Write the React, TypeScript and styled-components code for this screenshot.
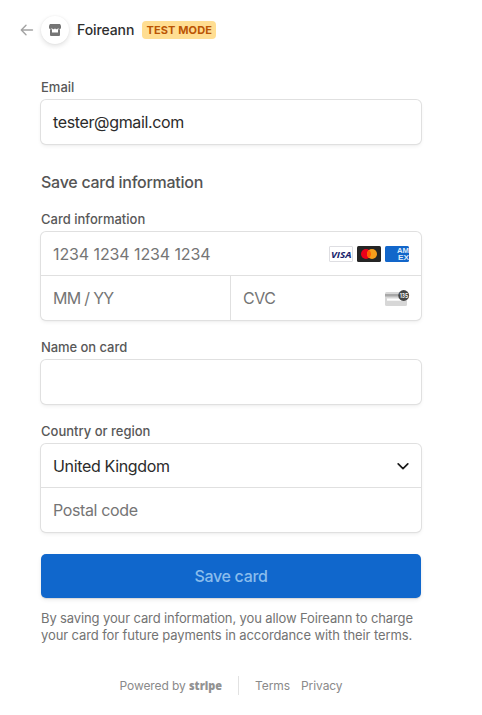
import React from "react";
import styled, { createGlobalStyle } from "styled-components";

const GlobalStyle = createGlobalStyle`
  *, *::before, *::after { box-sizing: border-box; }
  body {
    margin: 0;
    background: #fff;
    font-family: Inter, "Liberation Sans", sans-serif;
    -webkit-font-smoothing: antialiased;
  }
`;

const Page = styled.main`
  display: flex;
  flex-direction: column;
  width: 482px;
  height: 715px;
  overflow: hidden;
`;

const Header = styled.header`
  display: flex;
  align-items: center;
  height: 28px;
  margin: 16px 0 0 20px;
`;

const BackIcon = styled.svg`
  width: 14px;
  height: 12px;
  margin-right: 7px;
`;

const Avatar = styled.span`
  display: flex;
  align-items: center;
  justify-content: center;
  width: 28px;
  height: 28px;
  border-radius: 50%;
  box-shadow: 0 2px 5px rgba(0, 0, 0, 0.12), 0 0 2px rgba(0, 0, 0, 0.06);
`;

const Merchant = styled.h1`
  margin: 0 8px;
  width: 57px;
  white-space: nowrap;
  font-size: 14px;
  line-height: 18px;
  font-weight: 500;
  letter-spacing: -0.1px;
  color: #2e2e2e;
`;

const Badge = styled.span`
  width: 74px;
  height: 18px;
  padding-left: 0.5px;
  border-radius: 4px;
  background: #ffde92;
  color: #bb5504;
  font-size: 11px;
  line-height: 18px;
  font-weight: 700;
  letter-spacing: 0.1px;
  text-align: center;
  white-space: nowrap;
`;

const Form = styled.form`
  display: flex;
  flex-direction: column;
  width: 380px;
  margin: 35px 0 0 41px;
`;

const Field = styled.div<{ $gap?: number }>`
  display: flex;
  flex-direction: column;
  gap: 4px;
  margin-bottom: ${(p) => p.$gap ?? 18}px;
`;

const Label = styled.label<{ $tracking?: number }>`
  height: 17px;
  font-size: 13px;
  line-height: 17px;
  font-weight: 500;
  letter-spacing: ${(p) => p.$tracking ?? 0}px;
  color: #585858;
`;

const Title = styled.h2`
  margin: 0 0 19px;
  height: 20px;
  font-size: 16px;
  line-height: 20px;
  font-weight: 500;
  letter-spacing: -0.27px;
  color: #545454;
`;

const ControlGroup = styled.div`
  border-radius: 5px;
  background: #fff;
  box-shadow: 0 0 0 1px #e0e0e0, 0 2px 4px rgba(0, 0, 0, 0.07),
    0 1px 2px rgba(0, 0, 0, 0.05);
`;

const Row = styled.div<{ $divided?: boolean }>`
  display: flex;
  height: 44px;
  border-bottom: ${(p) => (p.$divided ? "1px solid #e0e0e0" : "0")};
`;

const Cell = styled.div<{ $width?: number; $split?: boolean }>`
  display: flex;
  flex: ${(p) => (p.$width ? `0 0 ${p.$width}px` : "1")};
  align-items: center;
  justify-content: space-between;
  padding: 0 12px;
  border-left: ${(p) => (p.$split ? "1px solid #e0e0e0" : "0")};
`;

const Value = styled.span<{ $muted?: boolean; $tracking?: number }>`
  font-size: 16px;
  line-height: 24px;
  white-space: nowrap;
  letter-spacing: ${(p) => p.$tracking ?? 0}px;
  color: ${(p) => (p.$muted ? "#757575" : "#2b2b2b")};
`;

const Brands = styled.span`
  display: flex;
  gap: 4px;
`;

const CardArt = styled.svg`
  display: block;
  width: 24px;
  height: 16px;
  overflow: visible;
`;

const Chevron = styled.svg`
  width: 12px;
  height: 12px;
`;

const Submit = styled.button`
  width: 380px;
  height: 44px;
  margin: 4px 0 12px;
  padding: 0;
  border: 0;
  border-radius: 5px;
  background: #1067cc;
  box-shadow: 0 2px 4px rgba(0, 0, 0, 0.08), 0 1px 1px rgba(0, 0, 0, 0.1);
  color: #8abdec;
  font-family: inherit;
  font-size: 16px;
  font-weight: 500;
  letter-spacing: -0.32px;
`;

const Consent = styled.p`
  margin: 0;
  font-size: 13px;
  line-height: 17px;
  color: #737373;
`;

const ConsentLine = styled.span<{ $tracking: number }>`
  display: block;
  white-space: nowrap;
  letter-spacing: ${(p) => p.$tracking}px;
`;

const Footer = styled.footer`
  display: flex;
  align-items: center;
  height: 20px;
  margin: 31px 0 0 119px;
  font-size: 12px;
  line-height: 18px;
  color: #8a8a8a;
  white-space: nowrap;
`;

const Powered = styled.span`
  width: 70px;
  padding: 1px 0 0 0.5px;
  letter-spacing: -0.08px;
`;

const StripeMark = styled.svg`
  display: block;
  width: 34px;
  height: 18px;
`;

const Separator = styled.span`
  width: 1px;
  height: 19px;
  margin: 0 16px 0 15px;
  background: #e2e2e2;
`;

const FooterLink = styled.span<{ $width?: number }>`
  padding-top: 1px;
  letter-spacing: -0.08px;
  width: ${(p) => (p.$width ? `${p.$width}px` : "auto")};
`;

const StoreIcon = () => (
  <svg width="12" height="12" viewBox="0 0 12 12" fill="#757575">
    <path d="M1.2 0h9.6a.7.7 0 0 1 .6.4L12 2v1.4a1.5 1.5 0 0 1-3 .3 1.5 1.5 0 0 1-3 0 1.5 1.5 0 0 1-3 0 1.5 1.5 0 0 1-3-.3V2L.6.4A.7.7 0 0 1 1.2 0z" />
    <path d="M1 5.2h2V8.6h6V5.2h2V11a1 1 0 0 1-1 1H2a1 1 0 0 1-1-1z" />
  </svg>
);

const Visa = () => (
  <CardArt viewBox="0 0 24 16">
    <rect x=".5" y=".5" width="23" height="15" rx=".5" fill="#fff" stroke="#dedee2" />
    <text x="2" y="11.5" textLength="20.5" lengthAdjust="spacingAndGlyphs" fontFamily="Open Sans" fontSize="9.5" fontWeight="700" fontStyle="italic" fill="#171e6c">
      VISA
    </text>
  </CardArt>
);

const Mastercard = () => (
  <CardArt viewBox="0 0 24 16">
    <rect width="24" height="16" rx="1.5" fill="#252525" />
    <circle cx="9" cy="8" r="5" fill="#eb001b" />
    <circle cx="15" cy="8" r="5" fill="#f79e1b" />
    <path d="M12 4a5 5 0 0 1 0 8 5 5 0 0 1 0-8z" fill="#ff5f00" />
  </CardArt>
);

const Amex = () => (
  <CardArt viewBox="0 0 24 16">
    <rect width="24" height="16" rx="1.5" fill="#1266ca" />
    <g fontFamily="Liberation Sans" fontSize="7" fontWeight="700" fill="#dceafa">
      <text x="12" y="7.4" textLength="12" lengthAdjust="spacingAndGlyphs">AM</text>
      <text x="13" y="13.6" textLength="11" lengthAdjust="spacingAndGlyphs">EX</text>
    </g>
  </CardArt>
);

const CvcArt = () => (
  <CardArt viewBox="0 0 24 16">
    <rect y="2" width="22" height="14" rx="1.5" fill="#d7d7d7" />
    <rect y="4" width="22" height="2.5" fill="#a8a8a8" />
    <rect x="2" y="8.5" width="14" height="2.2" fill="#fff" />
    <circle cx="18.7" cy="5.5" r="5.4" fill="#454545" />
    <text x="18.9" y="7.8" textAnchor="middle" textLength="8.4" lengthAdjust="spacingAndGlyphs" fontFamily="Inter" fontSize="6.5" fontWeight="600" fill="#fff">
      135
    </text>
  </CardArt>
);

export default function App() {
  return (
    <>
      <GlobalStyle />
      <Page>
        <Header>
          <BackIcon viewBox="0 0 14 12" fill="none" stroke="#a3a3a3" strokeWidth="1.4" strokeLinecap="round" strokeLinejoin="round">
            <path d="M12.5 6H1.5M6 1.3 1.3 6 6 10.7" />
          </BackIcon>
          <Avatar><StoreIcon /></Avatar>
          <Merchant>Foireann</Merchant>
          <Badge>TEST MODE</Badge>
        </Header>
        <Form>
          <Field $gap={28}>
            <Label>Email</Label>
            <ControlGroup>
              <Row><Cell><Value $tracking={-0.36}>tester@gmail.com</Value></Cell></Row>
            </ControlGroup>
          </Field>
          <Title>Save card information</Title>
          <Field $gap={19}>
            <Label>Card information</Label>
            <ControlGroup>
              <Row $divided>
                <Cell>
                  <Value $muted $tracking={-0.1}>1234 1234 1234 1234</Value>
                  <Brands><Visa /><Mastercard /><Amex /></Brands>
                </Cell>
              </Row>
              <Row>
                <Cell $width={189}><Value $muted $tracking={-0.7}>MM / YY</Value></Cell>
                <Cell $split><Value $muted $tracking={-0.5}>CVC</Value><CvcArt /></Cell>
              </Row>
            </ControlGroup>
          </Field>
          <Field $gap={19}>
            <Label $tracking={-0.06}>Name on card</Label>
            <ControlGroup><Row /></ControlGroup>
          </Field>
          <Field>
            <Label>Country or region</Label>
            <ControlGroup>
              <Row $divided>
                <Cell>
                  <Value $tracking={-0.34}>United Kingdom</Value>
                  <Chevron viewBox="0 0 12 12" fill="none" stroke="#1a1a1a" strokeWidth="1.7" strokeLinecap="round" strokeLinejoin="round">
                    <path d="M1.2 3.8 6 8.6l4.8-4.8" />
                  </Chevron>
                </Cell>
              </Row>
              <Row><Cell><Value $muted $tracking={-0.37}>Postal code</Value></Cell></Row>
            </ControlGroup>
          </Field>
          <Submit type="button">Save card</Submit>
          <Consent>
            <ConsentLine $tracking={-0.12}>By saving your card information, you allow Foireann to charge</ConsentLine>
            <ConsentLine $tracking={-0.1}>your card for future payments in accordance with their terms.</ConsentLine>
          </Consent>
        </Form>
        <Footer>
          <Powered>Powered by</Powered>
          <StripeMark viewBox="0 0 34 18">
            <text x="0" y="13.5" textLength="33" lengthAdjust="spacingAndGlyphs" fontFamily="Open Sans" fontSize="13" fontWeight="800" fill="#929292">
              stripe
            </text>
          </StripeMark>
          <Separator />
          <FooterLink $width={46}>Terms</FooterLink>
          <FooterLink>Privacy</FooterLink>
        </Footer>
      </Page>
    </>
  );
}
